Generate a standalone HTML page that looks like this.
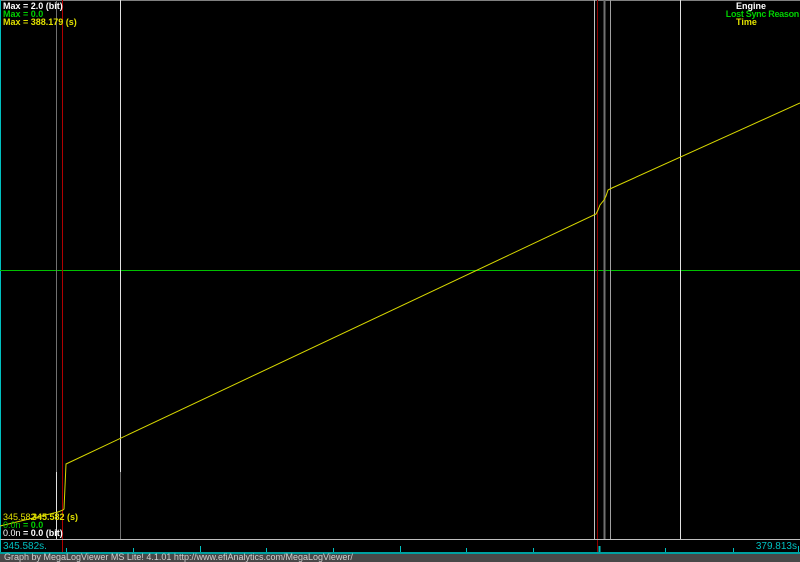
<!DOCTYPE html>
<html><head><style>
body{margin:0;width:800px;height:562px;overflow:hidden;background:#000;font-family:"Liberation Sans",sans-serif;}
.t{position:absolute;font-size:9px;font-weight:bold;line-height:9px;white-space:nowrap}
</style></head><body>
<svg width="800" height="562" style="position:absolute;left:0;top:0" shape-rendering="crispEdges">
<rect x="0" y="0" width="800" height="562" fill="#000"/>
<line x1="0" y1="0.5" x2="800" y2="0.5" stroke="#808080"/>
<line x1="0.5" y1="0" x2="0.5" y2="553" stroke="#00c0c0"/>
<line x1="0" y1="270.5" x2="800" y2="270.5" stroke="#00c000"/>
<line x1="56.5" y1="0" x2="56.5" y2="472" stroke="#707070"/>
<line x1="56.5" y1="472" x2="56.5" y2="539" stroke="#e0e0e0"/>
<line x1="120.5" y1="0" x2="120.5" y2="472" stroke="#e0e0e0"/>
<line x1="120.5" y1="472" x2="120.5" y2="539" stroke="#707070"/>
<line x1="594.5" y1="0" x2="594.5" y2="539" stroke="#c0c0c0"/>
<line x1="604.5" y1="0" x2="604.5" y2="539" stroke="#707070" stroke-width="2"/>
<line x1="610.5" y1="0" x2="610.5" y2="539" stroke="#a0a0a0"/>
<line x1="680.5" y1="0" x2="680.5" y2="539" stroke="#e0e0e0"/>
<line x1="62.5" y1="0" x2="62.5" y2="562" stroke="#b00000"/>
<line x1="597.5" y1="0" x2="597.5" y2="562" stroke="#900000"/>
<line x1="0" y1="539.5" x2="800" y2="539.5" stroke="#c0c0c0"/>
<rect x="0" y="552" width="800" height="2" fill="#00a0a0"/>
<g stroke="#00c0c0">
<line x1="66.5" y1="548" x2="66.5" y2="552"/><line x1="133.5" y1="548" x2="133.5" y2="552"/>
<line x1="200.5" y1="546" x2="200.5" y2="552"/><line x1="266.5" y1="548" x2="266.5" y2="552"/>
<line x1="333.5" y1="548" x2="333.5" y2="552"/><line x1="400.5" y1="546" x2="400.5" y2="552"/>
<line x1="466.5" y1="548" x2="466.5" y2="552"/><line x1="533.5" y1="548" x2="533.5" y2="552"/>
<line x1="599.5" y1="546" x2="599.5" y2="552" stroke-width="2"/><line x1="665.5" y1="548" x2="665.5" y2="552"/>
<line x1="733.5" y1="548" x2="733.5" y2="552"/><line x1="798.5" y1="546" x2="798.5" y2="552"/>
</g>
<rect x="0" y="554" width="800" height="8" fill="#484848"/>
<polyline shape-rendering="auto" fill="none" stroke="#d8d800" stroke-width="1" points="0,526 58,512 63,510 64,509 66,464 596,214 598,210 600,205 604,200 606,196 608,190 612,188 800,103"/>
</svg>
<div class="t" style="left:3px;top:2px;color:#fff">Max = 2.0 (bit)</div>
<div class="t" style="left:3px;top:10px;color:#00d000">Max = 0.0</div>
<div class="t" style="left:3px;top:18px;color:#e0e000">Max = 388.179 (s)</div>
<div class="t" style="left:736px;top:2px;color:#fff">Engine</div>
<div class="t" style="right:1px;top:10px;color:#00d000;letter-spacing:-0.3px">Lost Sync Reason</div>
<div class="t" style="left:736px;top:18px;color:#e0e000">Time</div>
<div class="t" style="left:3px;top:513px;color:#e0e000;font-weight:normal">345.582</div>
<div class="t" style="left:32px;top:513px;color:#e0e000">345.582 (s)</div>
<div class="t" style="left:3px;top:521px;color:#00d000"><span style="font-weight:normal">0.0n</span> = 0.0</div>
<div class="t" style="left:3px;top:529px;color:#fff"><span style="font-weight:normal">0.0n</span> = 0.0 (bit)</div>
<div class="t" style="left:3px;top:542px;color:#00c0c0;font-weight:normal;font-size:10px">345.582s.</div>
<div class="t" style="right:3px;top:542px;color:#00c0c0;font-weight:normal;font-size:10px">379.813s</div>
<div class="t" style="left:4px;top:553px;color:#d0d0d0;font-weight:normal;font-size:9px">Graph by MegaLogViewer MS Lite! 4.1.01 http://www.efiAnalytics.com/MegaLogViewer/</div>
</body></html>
